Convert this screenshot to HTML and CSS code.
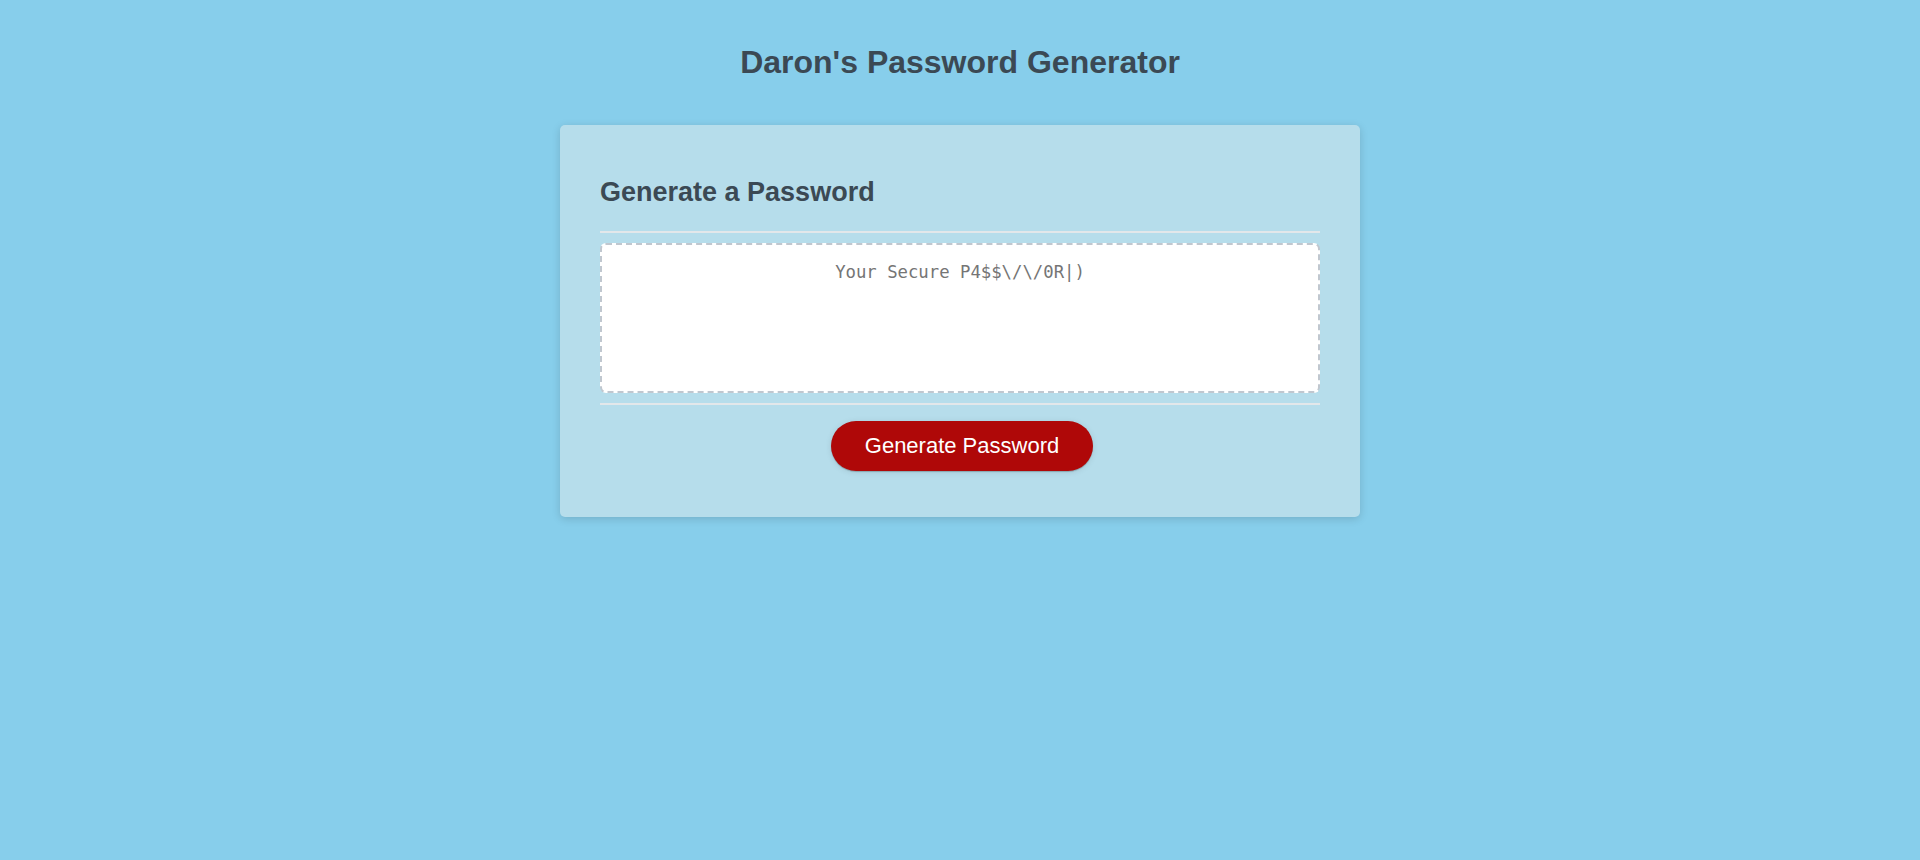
FILE: index.html
```html
<!DOCTYPE html>
<html lang="en">
<head>
<meta charset="UTF-8">
<title>Daron's Password Generator</title>
<link rel="stylesheet" href="styles.css">
</head>
<body>
<div class="wrapper">
  <header class="page-header">
    <h1 class="page-title">Daron's Password Generator</h1>
  </header>
  <div class="card">
    <div class="card-header">
      <h2 class="card-title">Generate a Password</h2>
    </div>
    <div class="card-body">
      <textarea readonly class="password" placeholder="Your Secure P4$$\/\/0R|)" aria-label="Generated Password"></textarea>
    </div>
    <div class="card-footer">
      <button class="btn">Generate Password</button>
    </div>
  </div>
</div>
</body>
</html>
```

FILE: styles.css
```css
*, *::before, *::after {
  box-sizing: border-box;
}

html, body {
  margin: 0;
  padding: 0;
  height: 100%;
}

body {
  background-color: #87ceeb;
  font-family: "Liberation Sans", Arial, sans-serif;
  color: #3b4954;
}

.wrapper {
  padding: 0 20px;
}

.page-header {
  text-align: center;
  padding: 44px 20px 44px;
}

.page-title {
  margin: 0;
  font-size: 32px;
  line-height: 37px;
  font-weight: bold;
  color: #3b4954;
}

.card {
  max-width: 800px;
  margin: 0 auto;
  background-color: #b6ddeb;
  border-radius: 5px;
  box-shadow: rgba(0, 0, 0, 0.15) 0 2px 8px 0;
  padding: 30px 40px;
  font-size: 18px;
}

.card-title {
  margin: 22.4px 0;
  font-size: 27px;
  line-height: 31px;
  font-weight: bold;
}

.card-header::after {
  content: "";
  display: block;
  height: 2px;
  background: #e2e7ea;
}

.card-body {
  padding: 10px 0;
}

.password {
  display: block;
  width: 100%;
  height: 150px;
  margin: 0;
  padding: 16px 15px 85px;
  border: 2px dashed #c0c7cf;
  border-radius: 6px;
  background: #ffffff;
  font-family: "DejaVu Sans Mono", "Liberation Mono", monospace;
  font-size: 17.3px;
  line-height: 23px;
  text-align: center;
  resize: none;
  overflow: hidden;
  outline: none;
  color: #3b4954;
}

.password::placeholder {
  color: #757575;
  opacity: 1;
}

.card-footer {
  text-align: center;
}

.card-footer::before {
  content: "";
  display: block;
  height: 2px;
  background: #e2e7ea;
}

.btn {
  display: inline-block;
  border: none;
  background-color: #af0808;
  color: #ffffff;
  border-radius: 25px;
  font-family: "Liberation Sans", Arial, sans-serif;
  font-size: 22px;
  line-height: 22px;
  padding: 14px 34px;
  margin: 16px 16px 16px 20px;
  cursor: pointer;
  box-shadow: rgba(0, 0, 0, 0.1) 0 1px 6px 0, rgba(0, 0, 0, 0.2) 0 1px 1px 0;
  vertical-align: top;
}
```
